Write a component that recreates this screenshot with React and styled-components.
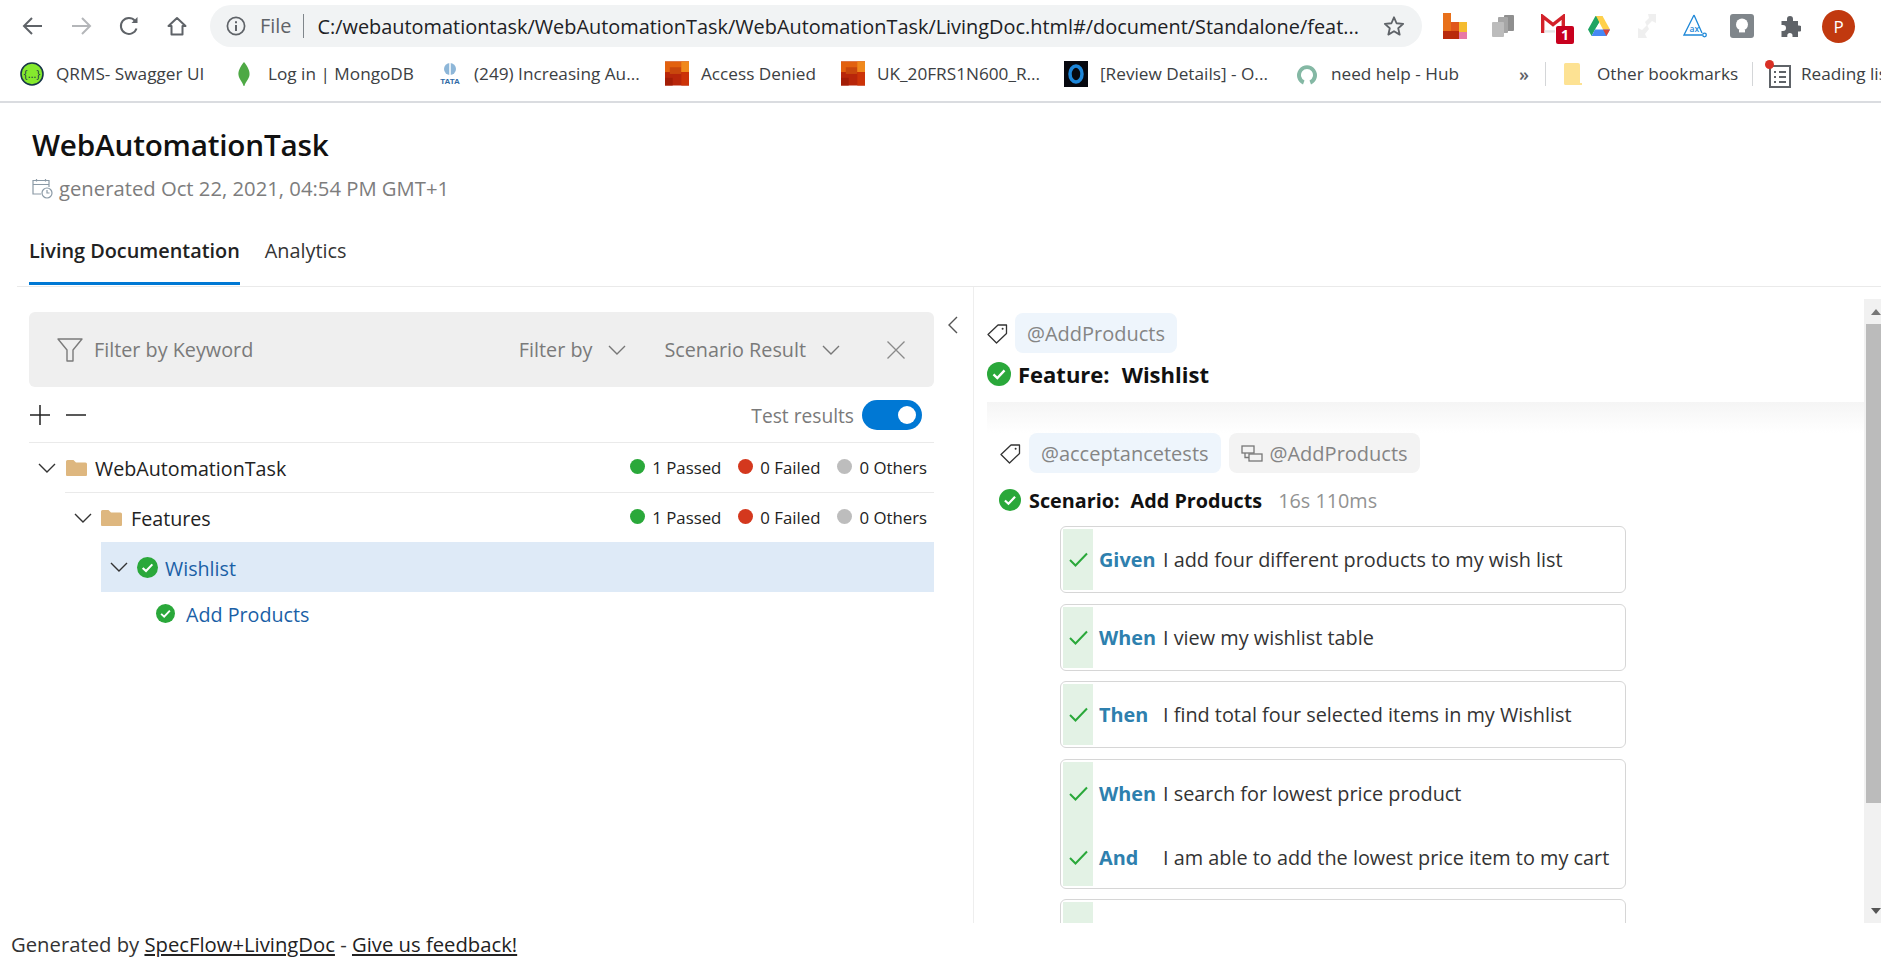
import React from "react";
import styled, { createGlobalStyle } from "styled-components";

const GlobalStyle = createGlobalStyle`
    html, body { margin: 0; padding: 0; background: #fff; overflow: hidden; }
    body { font-family: "Open Sans", "Noto Sans", sans-serif; color: #222; }
    * { box-sizing: border-box; }
`;

/* ---------- small drawings ---------- */

const Chevron = ({ dir = "down", size = 18, color = "#333" }) => (
    <svg width={size} height={size} viewBox="0 0 18 18" fill="none" style={{ flex: "none" }}>
        <polyline
            points={dir === "down" ? "1,5 9,13 17,5" : "12,1 4,9 12,17"}
            stroke={color}
            strokeWidth="1.4"
        />
    </svg>
);

const Folder = () => (
    <svg width="21" height="16" viewBox="0 0 21 16" style={{ flex: "none" }}>
        <path d="M0 1.5 Q0 0 1.5 0 H7.5 L10 2.5 H19.5 Q21 2.5 21 4 V15 Q21 16 20 16 H1 Q0 16 0 15 Z" fill="#deb77f" />
    </svg>
);

const CheckCircle = ({ size = 20 }) => (
    <svg width={size} height={size} viewBox="0 0 20 20" style={{ flex: "none" }}>
        <circle cx="10" cy="10" r="10" fill="#2aa83a" />
        <polyline points="5.4,10.4 8.6,13.4 14.6,7" fill="none" stroke="#fff" strokeWidth="2" />
    </svg>
);

const TagIcon = () => (
    <svg width="21" height="21" viewBox="0 0 21 21" fill="none" style={{ flex: "none" }}>
        <path d="M1 11.5 L11 2 H19.5 V10.5 L9.5 20 Z" stroke="#333" strokeWidth="1.3" strokeLinejoin="round" />
        <circle cx="15.6" cy="5.8" r="1" fill="#333" />
    </svg>
);

const StepCheck = () => (
    <svg width="19" height="15" viewBox="0 0 19 15" fill="none">
        <polyline points="1,8 6.5,13.5 18,1.5" stroke="#2aa83a" strokeWidth="2" />
    </svg>
);

const CalendarClock = () => (
    <svg width="21" height="21" viewBox="0 0 21 21" fill="none" stroke="#8b9aa6" strokeWidth="1.2">
        <path d="M9 16 H1 V2.5 H17 V9" />
        <path d="M1 6.5 H17 M4.5 1 V3.5 M13.5 1 V3.5" />
        <circle cx="15" cy="15" r="5" fill="#fff" />
        <path d="M15 12 V15 H17.5" />
    </svg>
);

const Funnel = () => (
    <svg width="26" height="24" viewBox="0 0 26 24" fill="none" stroke="#7b7b7b" strokeWidth="1.4">
        <path d="M1 1 H25 L16 12 V23 H10 V12 Z" strokeLinejoin="round" />
    </svg>
);

const CloseX = () => (
    <svg width="18" height="18" viewBox="0 0 18 18" stroke="#8a8a8a" strokeWidth="1.3">
        <path d="M0.5 0.5 L17.5 17.5 M17.5 0.5 L0.5 17.5" />
    </svg>
);

const Plus = () => (
    <svg width="20" height="20" viewBox="0 0 20 20" stroke="#222" strokeWidth="1.5">
        <path d="M0 10 H20 M10 0 V20" />
    </svg>
);

const Minus = () => (
    <svg width="20" height="20" viewBox="0 0 20 20" stroke="#222" strokeWidth="1.5">
        <path d="M0 10 H20" />
    </svg>
);

const Gate = () => (
    <svg width="22" height="17" viewBox="0 0 22 17" fill="none" stroke="#777" strokeWidth="1.3">
        <rect x="1" y="1" width="12" height="7" />
        <rect x="8" y="9" width="13" height="7" />
        <path d="M4 8 V12.5 H8" />
    </svg>
);

const navStroke = { fill: "none", stroke: "#5f6368", strokeWidth: 2 };

const BackIcon = ({ muted }) => (
    <svg width="22" height="22" viewBox="0 0 22 22" {...navStroke} stroke={muted ? "#b4b6b9" : "#5f6368"}>
        {muted ? <path d="M2 11 H20 M12 3 L20 11 L12 19" /> : <path d="M20 11 H2 M10 3 L2 11 L10 19" />}
    </svg>
);

const ReloadIcon = () => (
    <svg width="22" height="22" viewBox="0 0 22 22" {...navStroke}>
        <path d="M18.5 13.5 A8 8 0 1 1 17 5.8" />
        <path d="M19.5 2 V8 H13.5" fill="#5f6368" stroke="none" />
    </svg>
);

const HomeIcon = () => (
    <svg width="20" height="20" viewBox="0 0 20 20" {...navStroke}>
        <path d="M1.5 10 L10 2 L18.5 10 H15.5 V18.5 H4.5 V10 Z" strokeLinejoin="round" />
    </svg>
);

const InfoIcon = () => (
    <svg width="20" height="20" viewBox="0 0 20 20" fill="none">
        <circle cx="10" cy="10" r="8.6" stroke="#5f6368" strokeWidth="1.7" />
        <path d="M10 9 V15 M10 5.2 V7.2" stroke="#5f6368" strokeWidth="2" />
    </svg>
);

const StarIcon = () => (
    <svg width="22" height="22" viewBox="0 0 24 24" fill="none" stroke="#5f6368" strokeWidth="2">
        <path d="M12 2.5 L14.8 9 L22 9.7 L16.6 14.4 L18.2 21.4 L12 17.7 L5.8 21.4 L7.4 14.4 L2 9.7 L9.2 9 Z" strokeLinejoin="round" />
    </svg>
);

const BarsExt = () => (
    <svg width="24" height="26" viewBox="0 0 24 26">
        <rect x="0" y="0" width="8" height="26" fill="#e8701a" />
        <rect x="8" y="9" width="8" height="17" fill="#e0561b" />
        <rect x="16" y="9" width="8" height="10" fill="#f5bc2f" />
        <rect x="0" y="18" width="16" height="8" fill="#b92a0c" />
        <rect x="16" y="19" width="8" height="7" fill="#e878a6" />
    </svg>
);

const CopiesExt = () => (
    <svg width="22" height="22" viewBox="0 0 22 22">
        <rect x="12" y="0" width="10" height="16" rx="1" fill="#8f8f8f" />
        <rect x="6" y="2" width="10" height="16" rx="1" fill="#a6a6a6" />
        <rect x="0" y="7" width="12" height="15" rx="1" fill="#bcbcbc" />
    </svg>
);

const GmailExt = () => (
    <svg width="24" height="19" viewBox="0 0 24 19" fill="none" stroke="#d3222a" strokeWidth="3.4">
        <path d="M1.7 19 V2.5 L12 10.5 L22.3 2.5 V14" />
        <path d="M3.4 17.4 H14" stroke="#e5e5e5" strokeWidth="2.4" />
    </svg>
);

const DriveExt = () => (
    <svg width="22" height="20" viewBox="0 0 22 20">
        <path d="M7.5 0 H14.5 L11 6.5 L8 11 Z" fill="#1fa463" />
        <path d="M14.5 0 L22 13.5 H15 L8 0 Z" fill="#ffd04b" />
        <path d="M0 13.5 L7.5 0 L11 6.5 L7 13.5 L3.6 20 Z" fill="#1fa463" />
        <path d="M7 13.5 H22 L18.4 20 H3.6 Z" fill="#4688f4" />
        <path d="M15 13.5 H22 L18.4 20 Z" fill="#db4437" />
    </svg>
);

const GhostExt = () => (
    <svg width="18" height="24" viewBox="0 0 18 24" fill="#efefef">
        <path d="M10 0 H18 V9 L14 7 L9 12 L7 8 L11 4 Z" />
        <path d="M0 24 V14 L4 16 L9 11 L11 15 L7 20 L9 24 Z" />
    </svg>
);

const AxExt = () => (
    <svg width="24" height="24" viewBox="0 0 24 24" fill="none" stroke="#1e88d8" strokeWidth="1.3">
        <path d="M11 1 L1 21 H19 M11 1 L19 19" />
        <circle cx="21.5" cy="21" r="1.8" />
        <text x="6.5" y="18" fontSize="8.5" fontFamily="Open Sans" fontWeight="600" fill="#1e88d8" stroke="none">ax</text>
    </svg>
);

const BulbExt = () => (
    <svg width="24" height="24" viewBox="0 0 24 24">
        <rect width="24" height="24" rx="3" fill="#80868b" />
        <circle cx="12" cy="10.5" r="6" fill="#fff" />
        <rect x="9" y="16" width="6" height="2.4" fill="#fff" />
    </svg>
);

const PuzzleExt = () => (
    <svg width="21" height="21" viewBox="0 0 21 21" fill="#5f6368">
        <path d="M7 3 a3 3 0 0 1 6 0 V5 H18 V9.5 H19 a3 3 0 0 1 0 6 H18 V21 H12.5 V19.5 a2.6 2.6 0 0 0 -5.2 0 V21 H1.5 V15 H3 a3 3 0 0 0 0 -6 H1.5 V5 H7 Z" />
    </svg>
);

const SwaggerFav = () => (
    <svg width="24" height="24" viewBox="0 0 24 24">
        <circle cx="12" cy="12" r="11" fill="#85ea2d" stroke="#173647" strokeWidth="1.6" />
        <text x="12" y="16" fontSize="11" textAnchor="middle" fontFamily="Open Sans" fill="#173647">{"{…}"}</text>
    </svg>
);

const LeafFav = () => (
    <svg width="12" height="24" viewBox="0 0 12 24">
        <path d="M6 0 C10 5 12 9 11.5 13 C11 17 8 19 6.4 24 H5.6 C4 19 1 17 0.5 13 C0 9 2 5 6 0 Z" fill="#4ea945" />
    </svg>
);

const TataFav = () => (
    <svg width="24" height="24" viewBox="0 0 24 24">
        <ellipse cx="12" cy="7" rx="6" ry="6" fill="#8db6d8" />
        <path d="M12 1 V13" stroke="#fff" strokeWidth="1.5" />
        <text x="12" y="22" fontSize="8" fontWeight="700" textAnchor="middle" fontFamily="Liberation Sans" fill="#2f6aa5">TATA</text>
    </svg>
);

const SquaresFav = () => (
    <svg width="25" height="25" viewBox="0 0 25 25">
        <rect width="25" height="25" fill="#b8260a" />
        <rect width="25" height="11" fill="#e2610f" />
        <rect x="5" y="6" width="12" height="7" fill="#c8470d" />
        <rect x="17" width="8" height="11" fill="#f0891c" />
        <rect y="17" width="8" height="8" fill="#a31d06" />
        <rect x="17" y="11" width="8" height="14" fill="#cc3308" />
    </svg>
);

const RingFav = () => (
    <svg width="24" height="26" viewBox="0 0 24 26">
        <rect width="24" height="26" fill="#06080f" />
        <ellipse cx="12" cy="13" rx="6" ry="8" fill="none" stroke="#1d86d9" strokeWidth="3.5" />
    </svg>
);

const HubFav = () => (
    <svg width="24" height="24" viewBox="0 0 24 24">
        <path d="M8 22.5 A10 10 0 1 1 16 22.5 L14.5 18.5 A6 6 0 1 0 9.5 18.5 Z" fill="#84b8a4" />
    </svg>
);

const BookmarkFolder = () => (
    <svg width="18" height="22" viewBox="0 0 18 22" style={{ flex: "none" }}>
        <path d="M1.5 0 H14 Q16 0 16 2 V20 H18 V22 H1.5 Q0 22 0 20.5 V1.5 Q0 0 1.5 0 Z" fill="#fde293" />
    </svg>
);

const ReadingList = () => (
    <svg width="26" height="28" viewBox="0 0 26 28" fill="none" stroke="#5f6368" strokeWidth="2" style={{ flex: "none" }}>
        <rect x="5" y="6" width="20" height="21" />
        <path d="M9 12 H11 M14 12 H21 M9 17 H11 M14 17 H21 M9 22 H11 M14 22 H21" />
        <circle cx="4.5" cy="4.5" r="4.5" fill="#d93025" stroke="none" />
    </svg>
);

/* ---------- browser chrome ---------- */

const Chrome = styled.header`
    flex: none;
    height: 103px;
    border-bottom: 2px solid #dadce0;
    overflow: hidden;
`;

const ToolbarRow = styled.div`
    display: flex;
    align-items: center;
    height: 52px;
`;

const NavSlot = styled.span`
    flex: none;
    display: flex;
    width: 48px;
    justify-content: center;
    &:first-child { margin-left: 9px; }
`;

const Omnibox = styled.div`
    flex: none;
    display: flex;
    align-items: center;
    width: 1212px;
    height: 42px;
    margin-left: 9px;
    padding: 0 17px 0 16px;
    border-radius: 21px;
    background: #f1f3f4;
    font-size: 19.9px;
    white-space: nowrap;
`;

const Scheme = styled.span`
    margin: 0 13px 0 14px;
    padding-right: 12px;
    border-right: 1.5px solid #80868b;
    color: #5f6368;
    line-height: 24px;
`;

const Address = styled.span`
    flex: 1;
    color: #202124;
`;

const Extensions = styled.div`
    flex: 1;
    display: grid;
    grid-template-columns: 49px 49px 47px 50px 45px 47px 50px 42px auto;
    align-items: center;
    justify-items: start;
    padding-left: 21px;
`;

const GmailWrap = styled.span`
    position: relative;
    display: inline-flex;
    margin-top: -6px;
`;

const MailBadge = styled.span`
    position: absolute;
    left: 15px;
    top: 12px;
    width: 18px;
    height: 18px;
    border-radius: 2px;
    background: #c8001e;
    color: #fff;
    font: 700 14px/18px "Open Sans", sans-serif;
    text-align: center;
`;

const Avatar = styled.span`
    display: flex;
    align-items: center;
    justify-content: center;
    width: 33px;
    height: 33px;
    border-radius: 50%;
    background: #c1390f;
    color: #fff;
    font-size: 17px;
`;

const BookmarksBar = styled.nav`
    display: flex;
    align-items: center;
    height: 43px;
    padding-left: 20px;
    font-size: 17.2px;
    color: #3c4043;
    white-space: nowrap;
`;

const Bookmark = styled.span`
    flex: none;
    display: flex;
    align-items: center;
    gap: ${(p) => p.$gap || 12}px;
    width: ${(p) => p.$w}px;
`;

const FavSlot = styled.span`
    flex: none;
    display: flex;
    justify-content: center;
    width: 24px;
`;

const Overflow = styled.span`
    flex: none;
    margin-left: 59px;
    width: 26px;
    color: #5f6368;
    font-weight: 600;
    font-size: 18px;
`;

const BarSep = styled.span`
    flex: none;
    width: 1px;
    height: 24px;
    margin-right: ${(p) => p.$after}px;
    background: #d4d6d8;
`;

/* ---------- report header ---------- */

const Page = styled.div`
    display: flex;
    flex-direction: column;
    width: 100%;
    height: 100vh;
    overflow: hidden;
`;

const Header = styled.div`
    flex: none;
    padding: 22px 0 0 32px;
`;

const Title = styled.h1`
    margin: 0;
    font-size: 29.7px;
    line-height: 40px;
    font-weight: 600;
    color: #111;
    letter-spacing: -0.2px;
`;

const Generated = styled.div`
    display: flex;
    align-items: center;
    gap: 6px;
    margin-top: 9px;
    font-size: 20.25px;
    line-height: 28px;
    color: #7d7d7d;
`;

const TabBar = styled.div`
    flex: none;
    display: flex;
    gap: 25px;
    height: 62px;
    margin: 23px 0 0 17px;
    padding-left: 12px;
    border-bottom: 1.5px solid #eaeaea;
`;

const Tab = styled.div`
    display: flex;
    align-items: center;
    height: 60px;
    padding-bottom: 6px;
    font-size: 19.85px;
    font-weight: ${(p) => (p.$active ? 600 : 400)};
    color: ${(p) => (p.$active ? "#222" : "#333")};
    border-bottom: 3px solid ${(p) => (p.$active ? "#0078d4" : "transparent")};
`;

/* ---------- split panes ---------- */

const Split = styled.div`
    flex: 1;
    display: flex;
    min-height: 0;
`;

const LeftPane = styled.section`
    flex: none;
    position: relative;
    width: 973px;
    padding: 25px 39px 0 29px;
`;

const Collapse = styled.span`
    position: absolute;
    left: 945px;
    top: 29px;
`;

const FilterBar = styled.div`
    display: flex;
    align-items: center;
    height: 75px;
    padding: 0 29px 0 28px;
    border-radius: 6px;
    background: #efefef;
    font-size: 19.8px;
    color: #7a7a7a;
`;

const KeywordLabel = styled.span`
    margin-left: 11px;
    margin-right: auto;
`;

const FilterSelect = styled.span`
    display: flex;
    align-items: center;
    gap: 16px;
    margin-right: ${(p) => p.$after}px;
`;

const ActionRow = styled.div`
    display: flex;
    align-items: center;
    height: 55px;
    padding: 1px 12px 0 1px;
    gap: 16px;
`;

const TestLabel = styled.span`
    margin-left: auto;
    margin-right: -8px;
    font-size: 19.2px;
    color: #7a7a7a;
`;

const Toggle = styled.span`
    display: flex;
    align-items: center;
    justify-content: flex-end;
    width: 60px;
    height: 30px;
    padding-right: 6px;
    border-radius: 15px;
    background: #0078d4;
    &::after {
        content: "";
        width: 18px;
        height: 18px;
        border-radius: 50%;
        background: #fff;
    }
`;

const TreeRow = styled.div`
    display: flex;
    align-items: center;
    height: ${(p) => p.$h || 50}px;
    margin-left: ${(p) => p.$indent || 0}px;
    padding-left: ${(p) => p.$pad}px;
    padding-right: 7px;
    border-top: ${(p) => (p.$line ? "1.5px solid #eaeaea" : "none")};
    background: ${(p) => (p.$selected ? "#deeaf7" : "transparent")};
    font-size: 19.7px;
`;

const TreeIcon = styled.span`
    display: flex;
    margin-right: ${(p) => p.$after}px;
`;

const TreeName = styled.span`
    padding-top: 2px;
    color: ${(p) => (p.$link ? "#1a5fa6" : "#222")};
`;

const Stats = styled.span`
    display: flex;
    gap: 17px;
    margin-left: auto;
    font-size: 16.8px;
    color: #222;
`;

const Stat = styled.span`
    display: flex;
    align-items: center;
    gap: 7px;
    &::before {
        content: "";
        width: 15px;
        height: 15px;
        margin-top: -2px;
        border-radius: 50%;
        background: ${(p) => p.$color};
    }
`;

const RightPane = styled.section`
    flex: 1;
    display: flex;
    min-width: 0;
    border-left: 1.5px solid #eeeeee;
`;

const ScrollBody = styled.div`
    flex: 1;
    min-width: 0;
    overflow: hidden;
    padding: 26px 0 0 13px;
`;

const TagRow = styled.div`
    display: flex;
    align-items: center;
    gap: ${(p) => p.$gap}px;
    padding-left: ${(p) => p.$pad || 0}px;
`;

const TagPill = styled.span`
    display: inline-flex;
    align-items: center;
    gap: 7px;
    height: 40px;
    padding: 0 12px;
    border-radius: 8px;
    background: ${(p) => (p.$plain ? "#f3f3f3" : "#eef5fc")};
    font-size: 20px;
    color: #858585;
`;

const FeatureTitle = styled.h2`
    display: flex;
    align-items: center;
    gap: 7px;
    margin: 1px 0 0;
    height: 40px;
    font-size: 22px;
    font-weight: 700;
    color: #111;
`;

const TitleName = styled.span`
    margin-left: ${(p) => p.$ml}px;
`;

const HeaderShade = styled.div`
    height: 31px;
    margin-top: 8px;
    background: linear-gradient(to bottom, #f5f5f5, #ffffff);
`;

const ScenarioTitle = styled.h3`
    display: flex;
    align-items: center;
    gap: 8px;
    margin: 8px 0 0 12px;
    height: 38px;
    font-size: 19.8px;
    font-weight: 700;
    color: #111;
`;

const Duration = styled.span`
    margin-left: 8px;
    font-weight: 400;
    color: #929292;
`;

const Steps = styled.div`
    display: flex;
    flex-direction: column;
    gap: 10.5px;
    width: 566px;
    margin: 7px 0 0 73px;
`;

const StepCard = styled.div`
    padding: 2px;
    border: 1.5px solid #d6d6d6;
    border-radius: 6px;
`;

const StepRow = styled.div`
    display: grid;
    grid-template-columns: 30px 64px 1fr;
    align-items: center;
    height: ${(p) => p.$h}px;
    padding-top: ${(p) => p.$top}px;
    font-size: 19.85px;
    color: #333;
    white-space: nowrap;
    background: linear-gradient(to right, #e3f2e5 30px, #fff 30px);
`;

const StepTick = styled.span`
    display: flex;
    justify-content: center;
`;

const Keyword = styled.span`
    padding-left: 6px;
    font-weight: 700;
    color: #2e80ae;
`;

const StepText = styled.span`
    padding-left: 6px;
`;

const FakeScrollbar = styled.div`
    flex: none;
    display: flex;
    flex-direction: column;
    justify-content: space-between;
    width: 17px;
    margin-top: 12px;
    background: #f1f1f1;
`;

const ScrollArrow = styled.span`
    flex: none;
    height: 25px;
    display: flex;
    align-items: center;
    justify-content: center;
    padding-left: 7px;
    &::after {
        content: "";
        border-left: 5px solid transparent;
        border-right: 5px solid transparent;
        ${(p) => (p.$up ? "border-bottom: 6px solid #777;" : "border-top: 6px solid #555;")}
    }
`;

const ScrollThumb = styled.span`
    flex: 1;
    margin: 0 0 95px 2px;
    background: #bbbbbb;
`;

const Footer = styled.footer`
    flex: none;
    height: 45px;
    padding: 7px 0 0 11px;
    font-size: 20.25px;
    line-height: 28px;
    color: #333;
`;

const FooterLink = styled.a`
    color: #222;
    text-decoration: underline;
`;

const bookmarks = [
    { icon: <SwaggerFav />, text: "QRMS- Swagger UI", w: 212 },
    { icon: <LeafFav />, text: "Log in | MongoDB", w: 206 },
    { icon: <TataFav />, text: "(249) Increasing Au...", w: 227 },
    { icon: <SquaresFav />, text: "Access Denied", w: 176 },
    { icon: <SquaresFav />, text: "UK_20FRS1N600_R...", w: 223 },
    { icon: <RingFav />, text: "[Review Details] - O...", w: 231 },
    { icon: <HubFav />, text: "need help - Hub", w: 165 },
];

const stats = [
    { color: "#2aa83a", label: "1 Passed" },
    { color: "#d4381e", label: "0 Failed" },
    { color: "#bdbdbd", label: "0 Others" },
];

const steps = [
    [{ key: "Given", text: "I add four different products to my wish list", h: 61, top: 0 }],
    [{ key: "When", text: "I view my wishlist table", h: 61, top: 0 }],
    [{ key: "Then", text: "I find total four selected items in my Wishlist", h: 61, top: 0 }],
    [
        { key: "When", text: "I search for lowest price product", h: 63, top: 0 },
        { key: "And", text: "I am able to add the lowest price item to my cart", h: 61, top: 4 },
    ],
    [{ key: "", text: "", h: 61, top: 0 }],
];

const StatList = () => (
    <Stats>
        {stats.map((s) => (
            <Stat key={s.label} $color={s.color}>{s.label}</Stat>
        ))}
    </Stats>
);

export default function App() {
    return (
        <Page>
            <GlobalStyle />
            <Chrome>
                <ToolbarRow>
                    <NavSlot><BackIcon /></NavSlot>
                    <NavSlot><BackIcon muted /></NavSlot>
                    <NavSlot><ReloadIcon /></NavSlot>
                    <NavSlot><HomeIcon /></NavSlot>
                    <Omnibox>
                        <InfoIcon />
                        <Scheme>File</Scheme>
                        <Address>C:/webautomationtask/WebAutomationTask/WebAutomationTask/LivingDoc.html#/document/Standalone/feat...</Address>
                        <StarIcon />
                    </Omnibox>
                    <Extensions>
                        <BarsExt />
                        <CopiesExt />
                        <GmailWrap>
                            <GmailExt />
                            <MailBadge>1</MailBadge>
                        </GmailWrap>
                        <DriveExt />
                        <GhostExt />
                        <AxExt />
                        <BulbExt />
                        <PuzzleExt />
                        <Avatar>P</Avatar>
                    </Extensions>
                </ToolbarRow>
                <BookmarksBar>
                    {bookmarks.map((b) => (
                        <Bookmark key={b.text} $w={b.w}>
                            <FavSlot>{b.icon}</FavSlot>
                            {b.text}
                        </Bookmark>
                    ))}
                    <Overflow>»</Overflow>
                    <BarSep $after={18} />
                    <Bookmark $w={188} $gap={15}>
                        <BookmarkFolder />
                        Other bookmarks
                    </Bookmark>
                    <BarSep $after={12} />
                    <Bookmark $w={120} $gap={10}>
                        <ReadingList />
                        Reading list
                    </Bookmark>
                </BookmarksBar>
            </Chrome>

            <Header>
                <Title>WebAutomationTask</Title>
                <Generated>
                    <CalendarClock />
                    generated Oct 22, 2021, 04:54 PM GMT+1
                </Generated>
            </Header>

            <TabBar>
                <Tab $active>Living Documentation</Tab>
                <Tab>Analytics</Tab>
            </TabBar>

            <Split>
                <LeftPane>
                    <Collapse><Chevron dir="left" color="#555" /></Collapse>
                    <FilterBar>
                        <Funnel />
                        <KeywordLabel>Filter by Keyword</KeywordLabel>
                        <FilterSelect $after={38}>Filter by <Chevron color="#777" /></FilterSelect>
                        <FilterSelect $after={47}>Scenario Result <Chevron color="#777" /></FilterSelect>
                        <CloseX />
                    </FilterBar>
                    <ActionRow>
                        <Plus />
                        <Minus />
                        <TestLabel>Test results</TestLabel>
                        <Toggle />
                    </ActionRow>
                    <TreeRow $line $pad={9}>
                        <TreeIcon $after={10}><Chevron /></TreeIcon>
                        <TreeIcon $after={8}><Folder /></TreeIcon>
                        <TreeName>WebAutomationTask</TreeName>
                        <StatList />
                    </TreeRow>
                    <TreeRow $line $indent={36} $pad={9}>
                        <TreeIcon $after={9}><Chevron /></TreeIcon>
                        <TreeIcon $after={9}><Folder /></TreeIcon>
                        <TreeName>Features</TreeName>
                        <StatList />
                    </TreeRow>
                    <TreeRow $selected $indent={72} $pad={9}>
                        <TreeIcon $after={9}><Chevron /></TreeIcon>
                        <TreeIcon $after={7}><CheckCircle size={21} /></TreeIcon>
                        <TreeName $link>Wishlist</TreeName>
                    </TreeRow>
                    <TreeRow $indent={72} $pad={55} $h={42}>
                        <TreeIcon $after={11}><CheckCircle size={19} /></TreeIcon>
                        <TreeName $link>Add Products</TreeName>
                    </TreeRow>
                </LeftPane>

                <RightPane>
                    <ScrollBody>
                        <TagRow $gap={7}>
                            <TagIcon />
                            <TagPill>@AddProducts</TagPill>
                        </TagRow>
                        <FeatureTitle>
                            <CheckCircle size={24} />
                            Feature: <TitleName $ml={5}>Wishlist</TitleName>
                        </FeatureTitle>
                        <HeaderShade />
                        <TagRow $gap={8} $pad={13}>
                            <TagIcon />
                            <TagPill>@acceptancetests</TagPill>
                            <TagPill $plain><Gate />@AddProducts</TagPill>
                        </TagRow>
                        <ScenarioTitle>
                            <CheckCircle size={22} />
                            Scenario: <TitleName $ml={3}>Add Products</TitleName>
                            <Duration>16s 110ms</Duration>
                        </ScenarioTitle>
                        <Steps>
                            {steps.map((card, i) => (
                                <StepCard key={i}>
                                    {card.map((step, j) => (
                                        <StepRow key={j} $h={step.h} $top={step.top}>
                                            <StepTick>{step.key && <StepCheck />}</StepTick>
                                            <Keyword>{step.key}</Keyword>
                                            <StepText>{step.text}</StepText>
                                        </StepRow>
                                    ))}
                                </StepCard>
                            ))}
                        </Steps>
                    </ScrollBody>
                    <FakeScrollbar>
                        <ScrollArrow $up />
                        <ScrollThumb />
                        <ScrollArrow />
                    </FakeScrollbar>
                </RightPane>
            </Split>

            <Footer>
                Generated by <FooterLink>SpecFlow+LivingDoc</FooterLink> - <FooterLink>Give us feedback!</FooterLink>
            </Footer>
        </Page>
    );
}
